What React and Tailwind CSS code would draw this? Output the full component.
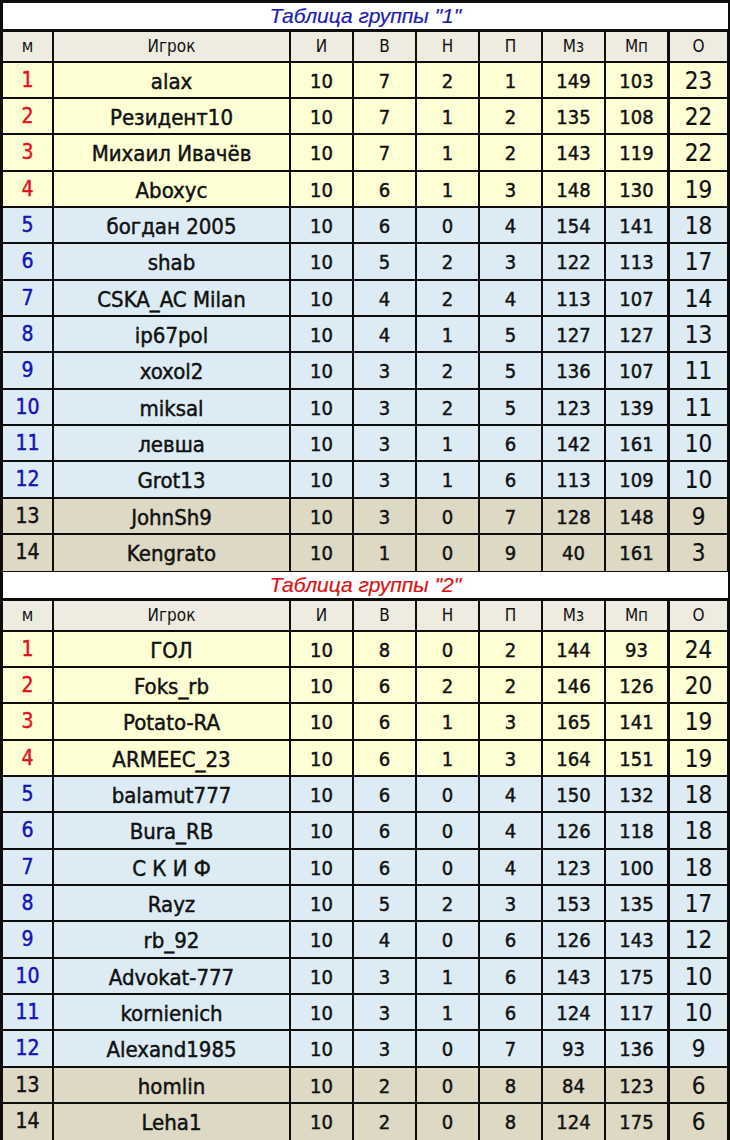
const group1 = [
  [1, 'alax', 10, 7, 2, 1, 149, 103, 23],
  [2, 'Резидент10', 10, 7, 1, 2, 135, 108, 22],
  [3, 'Михаил Ивачёв', 10, 7, 1, 2, 143, 119, 22],
  [4, 'Aboxyc', 10, 6, 1, 3, 148, 130, 19],
  [5, 'богдан 2005', 10, 6, 0, 4, 154, 141, 18],
  [6, 'shab', 10, 5, 2, 3, 122, 113, 17],
  [7, 'CSKA_AC Milan', 10, 4, 2, 4, 113, 107, 14],
  [8, 'ip67pol', 10, 4, 1, 5, 127, 127, 13],
  [9, 'xoxol2', 10, 3, 2, 5, 136, 107, 11],
  [10, 'miksal', 10, 3, 2, 5, 123, 139, 11],
  [11, 'левша', 10, 3, 1, 6, 142, 161, 10],
  [12, 'Grot13', 10, 3, 1, 6, 113, 109, 10],
  [13, 'JohnSh9', 10, 3, 0, 7, 128, 148, 9],
  [14, 'Kengrato', 10, 1, 0, 9, 40, 161, 3],
]

const group2 = [
  [1, 'ГОЛ', 10, 8, 0, 2, 144, 93, 24],
  [2, 'Foks_rb', 10, 6, 2, 2, 146, 126, 20],
  [3, 'Potato-RA', 10, 6, 1, 3, 165, 141, 19],
  [4, 'ARMEEC_23', 10, 6, 1, 3, 164, 151, 19],
  [5, 'balamut777', 10, 6, 0, 4, 150, 132, 18],
  [6, 'Bura_RB', 10, 6, 0, 4, 126, 118, 18],
  [7, 'С К И Ф', 10, 6, 0, 4, 123, 100, 18],
  [8, 'Rayz', 10, 5, 2, 3, 153, 135, 17],
  [9, 'rb_92', 10, 4, 0, 6, 126, 143, 12],
  [10, 'Advokat-777', 10, 3, 1, 6, 143, 175, 10],
  [11, 'kornienich', 10, 3, 1, 6, 124, 117, 10],
  [12, 'Alexand1985', 10, 3, 0, 7, 93, 136, 9],
  [13, 'homlin', 10, 2, 0, 8, 84, 123, 6],
  [14, 'Leha1', 10, 2, 0, 8, 124, 175, 6],
]

const headers = ['м', 'Игрок', 'И', 'В', 'Н', 'П', 'Мз', 'Мп', 'О']

const cols = 'grid grid-cols-[49px_235px_61px_61px_61px_61px_61px_61px_58px] gap-x-[2px]'

function rowBg(place) {
  if (place <= 4) return 'bg-[#ffffd6]'
  if (place <= 12) return 'bg-[#dcebf4]'
  return 'bg-[#ddd9c4]'
}

function placeColor(place) {
  if (place <= 4) return 'text-[#e3121b]'
  if (place <= 12) return 'text-[#1414b4]'
  return 'text-[#111]'
}

function Row({ data }) {
  const [place, name, ...nums] = data
  const bg = rowBg(place)
  const points = nums[nums.length - 1]
  const stats = nums.slice(0, -1)
  // 14 rows share 506px: 2px black rule on top, every third row a pixel taller
  const h = place % 3 === 0 && place < 13 ? 'h-[37px]' : 'h-[36px]'
  return (
    <div className={`${cols} ${h} border-t-2 border-[#0d0d0d]`}>
      <div className={`${bg} ${placeColor(place)} flex items-center justify-center text-[21px] [-webkit-text-stroke:0.45px]`}>
        {place}
      </div>
      <div className={`${bg} flex items-center justify-center text-[22px] text-[#111] [-webkit-text-stroke:0.45px]`}>
        {name}
      </div>
      {stats.map((n, i) => (
        <div key={i} className={`${bg} flex items-center justify-center text-[20px] text-[#111] [-webkit-text-stroke:0.45px]`}>
          {n}
        </div>
      ))}
      <div className={`${bg} ml-[1px] flex items-center justify-center text-[24px] text-[#111] [-webkit-text-stroke:0.2px]`}>
        {points}
      </div>
    </div>
  )
}

function Group({ title, titleColor, rows, first }) {
  return (
    <div className="flex flex-col">
      <div
        className={`h-[26px] ${first ? '' : 'mt-[3px]'} bg-white flex items-center justify-center italic text-[21px] ${titleColor} [-webkit-text-stroke:0.2px]`}
        style={{ fontFamily: '"Liberation Sans", Arial, sans-serif' }}
      >
        {title}
      </div>
      <div className={`${cols} h-[29px] mt-[3px]`}>
        {headers.map((h, i) => (
          <div
            key={h}
            className={`bg-[#eeece1] flex items-center justify-center text-[17px] text-[#111] ${i === 8 ? 'ml-[1px]' : ''}`}
          >
            {h}
          </div>
        ))}
      </div>
      <div className="flex flex-col">
        {rows.map((r) => (
          <Row key={r[0]} data={r} />
        ))}
      </div>
    </div>
  )
}

export default function App() {
  return (
    <div
      className="w-[730px] h-[1140px] bg-[#0d0d0d] pt-[3px] pl-[3px] pr-[2px] pb-[2px] overflow-hidden"
      style={{ fontFamily: '"DejaVu Sans Condensed", "DejaVu Sans", Verdana, sans-serif' }}
    >
      <Group title='Таблица группы "1"' titleColor="text-[#1c1cb0]" rows={group1} first />
      <Group title='Таблица группы "2"' titleColor="text-[#dd1111]" rows={group2} />
    </div>
  )
}
